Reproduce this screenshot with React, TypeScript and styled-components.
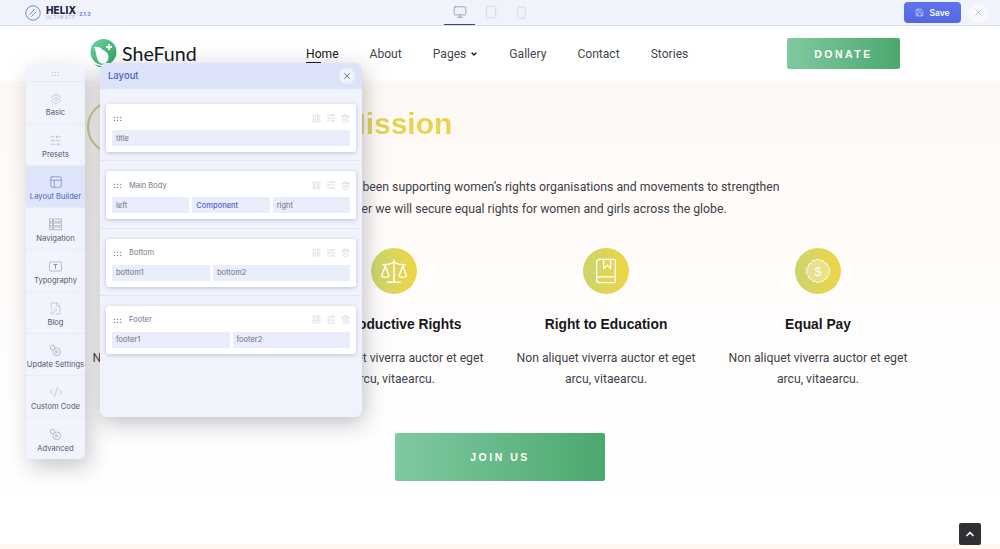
import React from "react";
import styled, { createGlobalStyle } from "styled-components";
import { Settings, SlidersHorizontal, PanelsTopLeft, FileEdit, CodeXml, Monitor, Tablet, Smartphone, Save, X, Scale, BookMarked, LayoutGrid, Trash2, ChevronUp, ChevronDown } from "lucide-react";

const Global = createGlobalStyle`
  html, body { margin: 0; padding: 0; background: #fff; }
  * { box-sizing: border-box; }
  #root { width: 1000px; height: 549px; overflow: hidden; position: relative; }
`;

const Page = styled.div`
  width: 1000px; height: 549px; display: flex; flex-direction: column;
  font-family: Roboto, sans-serif; background: #fff; position: relative; overflow: hidden;
`;

const TopBar = styled.header`
  height: 26px; flex: none; background: #f0f3fc; border-bottom: 1px solid #d9dce8;
  display: grid; grid-template-columns: 419px 93px 1fr; align-items: center; padding: 0 12px 0 25px;
  font-family: Inter, sans-serif;
`;
const Brand = styled.div` display: flex; align-items: center; gap: 5px; `;
const BrandText = styled.div` display: flex; flex-direction: column; `;
const BrandName = styled.span` font-size: 10px; line-height: 10px; font-weight: 800; color: #23253a; letter-spacing: .1px; `;
const BrandSub = styled.span` font-size: 4.5px; line-height: 6px; color: #a5a9bd; letter-spacing: 1px; `;
const Version = styled.span` font-size: 5px; font-weight: 700; color: #5d70d8; align-self: flex-end; margin: 0 0 4px -2px; `;
const Devices = styled.div` display: flex; align-self: stretch; `;
const Device = styled.div<{ $on?: boolean }>`
  width: 31px; display: flex; align-items: center; justify-content: center; height: 25px;
  color: ${p => (p.$on ? "#6b7086" : "#c5c8d6")};
  border-bottom: 1px solid ${p => (p.$on ? "#3f4668" : "transparent")};
`;
const Actions = styled.div` display: flex; justify-content: flex-end; align-items: center; gap: 7px; `;
const SaveBtn = styled.div`
  width: 57px; height: 21px; border-radius: 4px; background: linear-gradient(180deg, #5e73ec, #5467e0);
  color: #fff; font-size: 8.5px; font-weight: 600; display: flex; align-items: center; justify-content: center; gap: 5px;
`;
const CloseBtn = styled.div`
  width: 20px; height: 20px; border-radius: 50%; background: #f8f9fd; color: #85889a;
  display: flex; align-items: center; justify-content: center;
`;

const Nav = styled.nav`
  height: 55px; flex: none; background: #fff; display: flex; align-items: center; padding: 0 100px 0 90px;
`;
const Logo = styled.div` display: flex; align-items: center; gap: 5px; width: 216px; margin-top: -1px; `;
const LogoText = styled.span` font-family: Lato, sans-serif; font-size: 19.6px; color: #15161a; `;
const Menu = styled.div` display: flex; gap: 31px; font-size: 12.1px; color: #3b3d47; flex: 1; `;
const MenuItem = styled.span<{ $on?: boolean }>`
  display: flex; align-items: center; gap: 4px; position: relative;
  color: ${p => (p.$on ? "#15161a" : "#43454f")};
  ${p => p.$on && `&::after { content: ""; position: absolute; left: 0; width: 15px; bottom: -2px; height: 1px; background: #15161a; }`}
`;
const GreenBtn = styled.div<{ $w: number; $h: number }>`
  width: ${p => p.$w}px; height: ${p => p.$h}px; border-radius: 2px; flex: none;
  background: linear-gradient(90deg, #7fcaa0, #4ba86f); color: #fff; font-weight: 700;
  font-family: "Liberation Sans", sans-serif; font-size: 10.5px; letter-spacing: 2.5px;
  display: flex; align-items: center; justify-content: center;
`;

const Main = styled.main`
  flex: 1; display: flex; flex-direction: column;
  background: linear-gradient(180deg, #fff9f5 0%, #fffcfa 40%, #fff 90%);
`;
const Heading = styled.h2`
  margin: 25px 0 0 279px; font: 700 30px/36px "Liberation Sans", sans-serif; position: relative;
  background: linear-gradient(90deg, #cfd66b, #ecd348); -webkit-background-clip: text; background-clip: text; color: transparent; width: max-content;
  &::before { content: ""; position: absolute; left: -192px; top: -6px; width: 50px; height: 50px; border-radius: 50%; border: 2.5px solid #c5d27f; }
`;
const Intro = styled.p`
  margin: 34px 0 0 215px; font-size: 12.25px; line-height: 22px; color: #3d3f4a; white-space: nowrap;
`;
const Line = styled.span` display: block; `;
const Columns = styled.div`
  margin: 28px 0 0 76px; width: 848px; display: grid; grid-template-columns: repeat(4, 212px);
`;
const Column = styled.div` display: flex; flex-direction: column; align-items: center; text-align: center; `;
const Badge = styled.div`
  width: 46px; height: 46px; border-radius: 50%; background: linear-gradient(90deg, #cbd56f, #efd544);
  display: flex; align-items: center; justify-content: center; color: #fff;
`;
const ColTitle = styled.h3` margin: 22px 0 0; font: 700 13.8px/18px "Liberation Sans", sans-serif; color: #17181d; white-space: nowrap; `;
const ColText = styled.p` margin: 14px 0 0; font-size: 12.2px; line-height: 21px; color: #41434e; white-space: nowrap; `;
const JoinRow = styled.div` display: flex; justify-content: center; margin-top: 43px; `;
const Strip = styled.div` height: 5px; flex: none; background: #fdf6f1; `;
const ToTop = styled.div`
  position: absolute; left: 959px; top: 523px; width: 22px; height: 22px; background: #2f3033; border-radius: 2px; color: #fff;
  display: flex; align-items: center; justify-content: center;
`;

const Sidebar = styled.aside`
  position: absolute; left: 26px; top: 65px; width: 59px; height: 394px; background: #f2f4fd; border-radius: 5px;
  box-shadow: 4px 8px 22px rgba(50,55,80,.28); display: flex; flex-direction: column; font-family: Inter, sans-serif; overflow: hidden;
`;
const Grip = styled.div`
  height: 17px; flex: none; display: flex; align-items: center; justify-content: center; border-bottom: 1px solid #e7e9f5;
  color: #a4a7b8; font-size: 8px; letter-spacing: .5px; line-height: 1;
`;
const Item = styled.div<{ $on?: boolean }>`
  height: 42px; flex: none; display: flex; flex-direction: column; align-items: center; justify-content: flex-end; gap: 3px; padding-bottom: 6px;
  font-size: 7.6px; line-height: 9px; white-space: nowrap;
  color: ${p => (p.$on ? "#4c60c2" : "#55586c")}; background: ${p => (p.$on ? "#dfe6fb" : "transparent")};
  border-bottom: 1px solid #e9ebf6;
  & svg { color: ${p => (p.$on ? "#5d70c8" : "#a9acbc")}; }
`;

const Panel = styled.section`
  position: absolute; left: 100px; top: 63px; width: 262px; height: 354px; background: #f0f3fc; border-radius: 7px;
  box-shadow: 2px 6px 22px rgba(50,55,80,.32); font-family: Inter, sans-serif; overflow: hidden;
`;
const PanelHead = styled.div`
  height: 26px; background: #dde3f8; display: flex; align-items: center; justify-content: space-between; padding: 0 7px 1px 8px;
  color: #4c60c4; font-size: 9.5px; font-weight: 500;
`;
const PanelClose = styled.div`
  width: 16px; height: 16px; border-radius: 50%; background: #f1f3fc; color: #3d4050; display: flex; align-items: center; justify-content: center;
`;
const Rows = styled.div` padding: 5px 6px 0; `;
const Row = styled.div`
  margin: 0 -6px; padding: 10px 6px 8.33px; border-bottom: 1px solid #e2e5f3;
  &:last-child { border-bottom: none; }
`;
const Card = styled.div`
  height: 48px; background: #fff; border-radius: 3px; box-shadow: 0 1px 4px rgba(60,65,95,.28); padding: 0 6px;
  display: flex; flex-direction: column;
`;
const CardHead = styled.div` height: 26px; flex: none; display: flex; align-items: center; color: #74778b; font-size: 7.5px; padding: 2px 0 0 1px; `;
const Dots = styled.span` font-size: 8px; letter-spacing: .4px; color: #5f6274; width: 16px; font-weight: 700; line-height: 1; `;
const Tools = styled.div` margin-left: auto; display: flex; gap: 5px; color: #c3c6d3; align-items: center; `;
const Fields = styled.div<{ $cols: string }>` display: grid; grid-template-columns: ${p => p.$cols}; gap: 3px; `;
const Field = styled.div<{ $on?: boolean }>`
  height: 16px; background: #e9edfc; border-radius: 1px; padding-left: 4px; display: flex; align-items: center;
  font-size: 7.5px; color: ${p => (p.$on ? "#5064c8" : "#6d7084")}; font-weight: ${p => (p.$on ? 500 : 400)};
`;

const HelixLogo = () => (
  <svg width="16" height="16" viewBox="0 0 16 16" fill="none" stroke="#5a6aae" strokeWidth="0.8">
    <circle cx="8" cy="8" r="7.2" />
    <path d="M4.6 9.6 9.6 4.4M6.4 11.6l5-5.2" />
  </svg>
);
const SheLogo = () => (
  <svg width="27" height="28" viewBox="0 0 27 28">
    <defs><linearGradient id="g" x1="0" x2="1" y1="0" y2="1"><stop offset="0" stopColor="#6dd3a0" /><stop offset="1" stopColor="#2fa25f" /></linearGradient></defs>
    <circle cx="13.5" cy="13" r="13" fill="url(#g)" />
    <path d="M4 8c4-1 7 1 9 3 4 2 7 5 5 10-1 3-5 5-8 3C6 21 7 14 4 8z" fill="#fff" />
    <path d="M19 5v6M16 8h6" stroke="#fff" strokeWidth="1.8" />
    <path d="M4 25c5 2.500 12 3 17 0l-6 3H9z" fill="#2fa25f" />
  </svg>
);
const NavIcon = () => (
  <svg width="13" height="13" viewBox="0 0 13 13" fill="none" stroke="currentColor" strokeWidth=".8">
    <rect x=".5" y="1" width="3" height="2.800" /><rect x="4.500" y="1" width="8" height="2.800" />
    <rect x=".5" y="5" width="3" height="2.800" /><rect x="4.500" y="5" width="8" height="2.800" />
    <rect x=".5" y="9" width="3" height="2.800" /><rect x="4.500" y="9" width="8" height="2.800" />
  </svg>
);
const TypeIcon = () => (
  <svg width="13" height="13" viewBox="0 0 13 13" fill="none" stroke="currentColor" strokeWidth=".8">
    <rect x=".5" y="2" width="12" height="9" rx="1" />
    <path d="M4.500 4.500h4M6.500 4.500v4.500" stroke="#7a7d90" />
  </svg>
);
const UpdateIcon = () => (
  <svg width="13" height="13" viewBox="0 0 13 13" fill="none" stroke="currentColor" strokeWidth=".8">
    <circle cx="3.500" cy="3.500" r="2.300" /><circle cx="7.800" cy="7.800" r="3.800" fill="#f2f4fd" />
    <path d="M6.800 6.200v3.200l2.500-1.600z" />
  </svg>
);
const BadgeIcon = () => (
  <svg width="28" height="28" viewBox="0 0 28 28">
    <path
      d="M14 2q2.600 2.500 5.200 1.600q1.200 3 3.900 3.300q.2 3.100 2.600 4.600q-1.200 2.500 0 5q-2.400 1.500-2.600 4.600q-2.700.3-3.900 3.300q-2.600-.9-5.200 1.600q-2.600-2.500-5.200-1.600q-1.200-3-3.900-3.300q-.2-3.100-2.600-4.600q1.200-2.500 0-5q2.400-1.500 2.600-4.600q2.700-.3 3.900-3.300q2.600.9 5.200-1.600z"
      fill="rgba(255,255,255,.3)" stroke="#fff" strokeWidth=".9" strokeLinejoin="round"
    />
    <text x="14" y="18.500" textAnchor="middle" fontFamily="Liberation Sans, sans-serif" fontSize="13" fill="#fff" fillOpacity=".85">$</text>
  </svg>
);

const tools = (
  <Tools>
    <LayoutGrid size={9} strokeWidth={1.3} />
    <SlidersHorizontal size={10} strokeWidth={1.3} />
    <Trash2 size={9} strokeWidth={1.3} />
  </Tools>
);

const sideItems: [string, React.ReactNode, boolean?][] = [
  ["Basic", <Settings size={12} strokeWidth={1} />],
  ["Presets", <SlidersHorizontal size={13} strokeWidth={1} />],
  ["Layout Builder", <PanelsTopLeft size={14} strokeWidth={1} />, true],
  ["Navigation", <NavIcon />],
  ["Typography", <TypeIcon />],
  ["Blog", <FileEdit size={13} strokeWidth={1} />],
  ["Update Settings", <UpdateIcon />],
  ["Custom Code", <CodeXml size={14} strokeWidth={1} />],
  ["Advanced", <UpdateIcon />],
];

const rows: { name: string; cols: string; fields: string[] }[] = [
  { name: "", cols: "1fr", fields: ["title"] },
  { name: "Main Body", cols: "repeat(3, 1fr)", fields: ["left", "Component", "right"] },
  { name: "Bottom", cols: "5fr 7fr", fields: ["bottom1", "bottom2"] },
  { name: "Footer", cols: "1fr 1fr", fields: ["footer1", "footer2"] },
];

const cols: [string, React.ReactNode][] = [
  ["Economic Justice", <Scale size={28} strokeWidth={1.1} />],
  ["Reproductive Rights", <Scale size={30} strokeWidth={1.1} />],
  ["Right to Education", <BookMarked size={28} strokeWidth={1.1} />],
  ["Equal Pay", <BadgeIcon />],
];

export default function App() {
  return (
    <Page>
      <Global />
      <TopBar>
        <Brand>
          <HelixLogo />
          <BrandText><BrandName>HELIX</BrandName><BrandSub>ULTIMATE</BrandSub></BrandText>
          <Version>2.1.2</Version>
        </Brand>
        <Devices>
          <Device $on><Monitor size={14} strokeWidth={1} /></Device>
          <Device><Tablet size={14} strokeWidth={1} /></Device>
          <Device><Smartphone size={13} strokeWidth={1} /></Device>
        </Devices>
        <Actions>
          <SaveBtn><Save size={9} strokeWidth={1.4} />Save</SaveBtn>
          <CloseBtn><X size={11} strokeWidth={1} /></CloseBtn>
        </Actions>
      </TopBar>
      <Nav>
        <Logo><SheLogo /><LogoText>SheFund</LogoText></Logo>
        <Menu>
          <MenuItem $on>Home</MenuItem>
          <MenuItem>About</MenuItem>
          <MenuItem>Pages<ChevronDown size={8} strokeWidth={4} color="#15161a" /></MenuItem>
          <MenuItem>Gallery</MenuItem>
          <MenuItem>Contact</MenuItem>
          <MenuItem>Stories</MenuItem>
        </Menu>
        <GreenBtn $w={113} $h={31}>DONATE</GreenBtn>
      </Nav>
      <Main>
        <Heading>Our Mission</Heading>
        <Intro>
          <Line>For over ten years we have been supporting women’s rights organisations and movements to strengthen</Line>
          <Line>their shared voices. Together we will secure equal rights for women and girls across the globe.</Line>
        </Intro>
        <Columns>
          {cols.map(([title, icon]) => (
            <Column key={title}>
              <Badge>{icon}</Badge>
              <ColTitle>{title}</ColTitle>
              <ColText>Non aliquet viverra auctor et eget<br />arcu, vitaearcu.</ColText>
            </Column>
          ))}
        </Columns>
        <JoinRow><GreenBtn $w={210} $h={48}>JOIN US</GreenBtn></JoinRow>
      </Main>
      <Strip />
      <ToTop><ChevronUp size={12} strokeWidth={3.4} /></ToTop>
      <Sidebar>
        <Grip>:::</Grip>
        {sideItems.map(([label, icon, on]) => (
          <Item key={label} $on={on}>{icon}{label}</Item>
        ))}
      </Sidebar>
      <Panel>
        <PanelHead>Layout<PanelClose><X size={10} strokeWidth={1.6} /></PanelClose></PanelHead>
        <Rows>
          {rows.map(r => (
            <Row key={r.fields[0]}>
              <Card>
                <CardHead><Dots>:::</Dots>{r.name}{tools}</CardHead>
                <Fields $cols={r.cols}>
                  {r.fields.map(f => <Field key={f} $on={f === "Component"}>{f}</Field>)}
                </Fields>
              </Card>
            </Row>
          ))}
        </Rows>
      </Panel>
    </Page>
  );
}
